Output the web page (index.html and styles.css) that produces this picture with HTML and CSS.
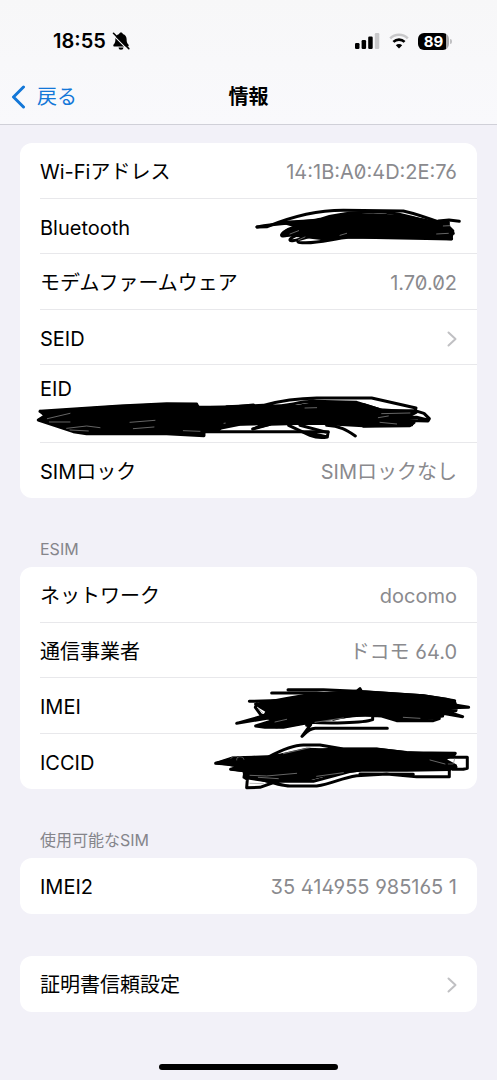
FILE: index.html
```html
<!DOCTYPE html>
<html lang="ja">
<head>
<meta charset="utf-8">
<meta name="viewport" content="width=device-width, initial-scale=1">
<title>情報</title>
<link rel="stylesheet" href="styles.css">
</head>
<body>
<header class="top">
  <div class="status">
    <div class="status-left">
      <span class="time">18:55</span>
      <svg class="bell" width="18" height="18" viewBox="0 0 18 18" aria-hidden="true">
        <path d="M9 0.500C8 0.500 7.300 1.100 7.200 1.900C4.600 2.700 3.400 4.600 3.400 7C3.400 10 3 11 1.600 12.400C0.900 13.400 1.400 14.600 2.600 14.600H15.400C16.600 14.600 17.100 13.400 16.400 12.400C15 11 14.600 10 14.600 7C14.600 4.600 13.400 2.700 10.800 1.900C10.700 1.100 10 0.500 9 0.500ZM6.500 15.600A2.500 2.200 0 0 0 11.500 15.600Z"/>
        <path class="bell-gap" d="M1 2.800L15.500 17.300"/>
        <path class="bell-slash" d="M1.500 1.300L16.800 16.600"/>
      </svg>
    </div>
    <div class="status-right">
      <svg width="25" height="16" viewBox="0 0 25 16" aria-hidden="true">
        <rect x="0" y="10" width="4.500" height="6" rx="1.200"/>
        <rect x="6.600" y="7" width="4.500" height="9" rx="1.200"/>
        <rect x="13.200" y="3.500" width="4.500" height="12.500" rx="1.200"/>
        <rect class="dim" x="19.800" y="0" width="4.500" height="16" rx="1.200"/>
      </svg>
      <svg width="20" height="16" viewBox="0 0 20 16" aria-hidden="true">
        <path class="wave dim-line" d="M1.200 5.400A12.500 12.500 0 0 1 18.800 5.400"/>
        <path class="wave" d="M4.400 8.900A8 8 0 0 1 15.600 8.900"/>
        <path d="M10 15.500L6.800 12.200A4.600 4.600 0 0 1 13.200 12.200Z"/>
      </svg>
      <span class="battery"><span class="battery-body">89</span><span class="battery-tip"></span></span>
    </div>
  </div>
  <nav class="nav">
    <a class="back" href="#">
      <svg width="15" height="24" viewBox="0 0 15 24" aria-hidden="true"><path d="M12.500 2L2.500 12L12.500 22"/></svg>
      <span>戻る</span>
    </a>
    <h1 class="title">情報</h1>
  </nav>
</header>

<main class="content">
  <ul class="card">
    <li class="row"><span class="label">Wi-Fiアドレス</span><span class="value slashed">14:1B:A0:4D:2E:76</span></li>
    <li class="row"><span class="label">Bluetooth</span>
      <svg class="ink" width="227" height="55" viewBox="250 199 227 55" aria-hidden="true">
        <g transform="translate(240 140) scale(.3333)">
          <path class="blot" d="M120 246L230 240L310 226L400 223L490 228L560 240L625 246L628 260L640 272L634 298L560 294L330 292L250 298L200 292L150 286L135 288L125 284L140 270L175 262Z"/>
          <path d="M51 261L82 260C150 232 230 211 310 211L490 213C535 223 575 238 612 252L625 248"/>
          <path d="M51 261C120 246 190 250 240 238C300 219 350 218 400 215C470 214 530 238 590 252"/>
          <path d="M595 243L627 240L658 244"/>
          <path d="M160 262C138 268 116 286 128 288C150 290 180 270 220 268M180 282C150 292 142 304 158 302C200 296 230 278 260 280M200 285C168 300 165 309 190 308C240 310 275 296 330 291L635 297L632 284M600 270L636 272L640 280L610 288"/>
          <path class="scratch" d="M150 282L176 272M300 286L320 280M175 300L195 291M590 282L625 280M610 258L630 257"/>
        </g>
      </svg>
    </li>
    <li class="row"><span class="label">モデムファームウェア</span><span class="value slashed">1.70.02</span></li>
    <li><button class="row" type="button"><span class="label">SEID</span><svg class="chevron" width="10" height="16" viewBox="0 0 10 16" aria-hidden="true"><path d="M1.500 1.500L8.500 8L1.500 14.500"/></svg></button></li>
    <li class="row row-tall"><span class="label">EID</span>
      <svg class="ink ink-left" width="457" height="78" viewBox="20 365 457 78" aria-hidden="true">
        <g transform="translate(20 360) scale(.3333)">
          <path class="blot" d="M62 156L130 150L300 138L440 132L530 134L538 142L690 138L720 140V192L660 194L600 206L555 208L551 226L440 220L190 219L150 210L90 190L58 178L74 168Z"/>
          <path d="M60 154L300 138L440 131L530 132L534 142L640 141L700 135M60 154L80 164L55 180L160 215L200 221L440 221L552 227V207L600 206M540 215H925"/>
          <path class="scratch" d="M82 176L150 160M88 186L150 186M140 205L200 198L240 203M150 210L205 213M330 187L405 181M340 206L402 201M490 212L540 214M612 190L655 184"/>
        </g>
        <g transform="translate(230 320) scale(.3333)">
          <path class="blot" d="M-10 264L110 257L200 258L260 248L400 252L450 268L530 273L560 278L540 288L480 292L520 300L550 306L546 316L400 319L280 312L200 312L120 314L70 326L100 312L-10 314Z"/>
          <path d="M-10 260L100 256C160 240 200 235 260 234H425L558 264L555 272L582 280L598 296L594 303L480 300M105 258C170 262 190 247 250 244L380 247L460 272L556 272M440 280L500 296L552 308L540 317L400 319M68 327L120 313M176 316L240 346C260 354 278 354 292 351L262 344L236 338M210 316L294 338L292 351M290 316C330 318 350 330 376 348M470 293L560 292L590 299"/>
          <path class="scratch" d="M225 264L260 263M445 293L475 288M450 307L500 312M455 281L540 279"/>
        </g>
      </svg>
    </li>
    <li class="row"><span class="label">SIMロック</span><span class="value">SIMロックなし</span></li>
  </ul>

  <h2 class="group-title">ESIM</h2>
  <ul class="card">
    <li class="row"><span class="label">ネットワーク</span><span class="value">docomo</span></li>
    <li class="row"><span class="label">通信事業者</span><span class="value">ドコモ 64.0</span></li>
    <li class="row"><span class="label">IMEI</span>
      <svg class="ink" width="277" height="56" viewBox="200 678 277 56" aria-hidden="true">
        <g transform="translate(200 670) scale(.3333)">
          <path class="blot" d="M165 102L260 84L330 72L470 62L560 68L670 76L740 86L765 94L770 110L735 122L728 138L700 146L600 150L545 134L470 136L380 150L280 165L230 172L180 166L220 152L190 140L200 124L180 112Z"/>
          <path d="M148 94L260 91L330 78M215 69H350L430 73M264 59H370L470 64L480 56L485 65L670 77L764 92L760 104L806 112L750 113M720 118L788 140L720 128M170 102L166 112L182 134L205 144L110 160L200 135M225 150L167 168L195 172L250 172L330 157C380 160 490 160 518 149V136M400 148C440 136 490 133 545 138L590 152H700L718 146L700 139M728 130V138L660 132M770 108L768 122L738 122M332 164L306 199C320 186 330 175 346 175H562M332 164L320 166"/>
          <path class="scratch" d="M176 116L190 130M225 156L260 148M345 157L430 144M610 142L660 145"/>
        </g>
      </svg>
    </li>
    <li class="row"><span class="label">ICCID</span>
      <svg class="ink" width="277" height="55" viewBox="200 734 277 55" aria-hidden="true">
        <g transform="translate(200 670) scale(.3333)">
          <path class="blot" d="M100 264L220 258L300 246L390 236L530 236L620 246L720 252L765 254L735 268L768 286L750 300L620 302L480 302L400 310L330 328L200 334L135 324L130 304L92 298L115 288L48 280Z"/>
          <path d="M47 280L100 263L205 261C260 232 290 225 310 225H360L430 237H530L620 248L766 250L758 257L725 264M47 280L80 282L125 290L92 298L135 302L132 322L142 328L140 353L180 352L225 336L480 300M150 318C190 330 240 348 270 348H350C400 340 420 325 470 317L560 312L650 320H748V300M200 334H340L460 302M738 262H802V295L790 298H758L740 282L768 291M220 260L320 238L390 240M480 312L640 313"/>
          <path class="scratch" d="M250 251L330 233M150 316L200 318L290 310M175 322L235 326M350 319L430 308M150 340L190 341M690 270L735 282"/>
          <path class="fine" d="M92 266A13 11 0 0 1 114 262M110 270A10 8 0 0 1 132 268M764 266L760 282H745"/>
        </g>
      </svg>
    </li>
  </ul>

  <h2 class="group-title">使用可能なSIM</h2>
  <ul class="card">
    <li class="row"><span class="label">IMEI2</span><span class="value">35 414955 985165 1</span></li>
  </ul>

  <ul class="card card-apart">
    <li><button class="row" type="button"><span class="label">証明書信頼設定</span><svg class="chevron" width="10" height="16" viewBox="0 0 10 16" aria-hidden="true"><path d="M1.500 1.500L8.500 8L1.500 14.500"/></svg></button></li>
  </ul>
</main>
<div class="home"></div>
</body>
</html>
```
FILE: styles.css
```css
* { box-sizing: border-box; }

body {
  margin: 0;
  min-height: 100vh;
  display: flex;
  flex-direction: column;
  background: #f2f1f8;
  color: #000;
  font-family: Inter, "Noto Sans CJK JP", sans-serif;
  font-size: 20px;
  line-height: 28px;
}

svg { display: block; flex: none; }

.top {
  background: linear-gradient(#f7f7f8, #f9f9fc);
  border-bottom: 1px solid #d0d0d8;
}

.status {
  height: 70px;
  padding: 12px 45px 0 53px;
  display: flex;
  align-items: center;
  justify-content: space-between;
}

.status-left { display: flex; align-items: center; gap: 6px; }
.status-right { display: flex; align-items: center; gap: 9px; }
.time { font-weight: 600; }

.bell-gap { stroke: #f7f7f8; stroke-width: 1.2; }
.bell-slash { stroke: #000; stroke-width: 1.6; stroke-linecap: round; }
.dim { fill: #c8c8ca; }
.wave { fill: none; stroke: #000; stroke-width: 2.6; }
.wave.dim-line { stroke: #c8c8ca; }

.battery { display: flex; align-items: center; gap: 1px; }
.battery-body {
  width: 31px;
  height: 17px;
  border-radius: 6px;
  background: linear-gradient(90deg, #000 90%, #aaaaac 90%);
  color: #fff;
  font-size: 15px;
  font-weight: 700;
  line-height: 17px;
  text-align: center;
}
.battery-tip { width: 2px; height: 5px; border-radius: 0 2px 2px 0; background: #c0c0c2; }

.nav {
  height: 54px;
  padding: 0 11px;
  display: grid;
  grid-template-columns: 1fr auto 1fr;
  align-items: center;
}

.back {
  display: flex;
  align-items: center;
  gap: 11px;
  color: #1377d8;
  text-decoration: none;
}
.back path { fill: none; stroke: #1377d8; stroke-width: 3; stroke-linecap: round; stroke-linejoin: round; }

.title { margin: 0; font-size: 20px; font-weight: 700; }

.content { padding: 18px 20px 0; }

.card {
  margin: 0;
  padding: 0;
  list-style: none;
  background: #fff;
  border-radius: 12px;
}
.card-apart { margin-top: 42px; }

.row {
  position: relative;
  width: 100%;
  min-height: 56px;
  padding: 2px 20px 0;
  display: flex;
  align-items: center;
  justify-content: space-between;
}
.card > :nth-child(even), .card > :nth-child(even) > .row { min-height: 55px; }
.card > li { position: relative; }
.card > li:not(:last-child)::after {
  content: "";
  position: absolute;
  left: 20px;
  right: 0;
  bottom: 0;
  height: 1px;
  background: #e8e8eb;
}

.card > .row-tall {
  min-height: 78px;
  padding-top: 10px;
  align-items: flex-start;
}

button.row {
  border: 0;
  background: none;
  color: inherit;
  font: inherit;
  text-align: left;
}

.value { color: #8a8a8e; font-feature-settings: "ss01"; }
.slashed { font-feature-settings: "zero", "ss01"; }

.chevron path { fill: none; stroke: #c0c0c3; stroke-width: 2; stroke-linecap: round; stroke-linejoin: round; }

.ink { position: absolute; z-index: 1; top: 0; right: 0; overflow: visible; }
.ink-left { right: auto; left: 0; }
.ink path { fill: none; stroke: #000; stroke-width: 9; stroke-linecap: round; stroke-linejoin: round; }
.ink .blot { fill: #000; stroke-width: 6; }
.ink .scratch { stroke: #999; stroke-width: 2; }
.ink .fine { stroke: #777; stroke-width: 2; }

.group-title {
  margin: 0;
  padding: 41px 20px 8px;
  color: #85858b;
  font-size: 16px;
  font-weight: 400;
  line-height: 20px;
}

.home {
  width: 36%;
  height: 6px;
  margin: auto auto 10px;
  border-radius: 3px;
  background: #000;
}
```
